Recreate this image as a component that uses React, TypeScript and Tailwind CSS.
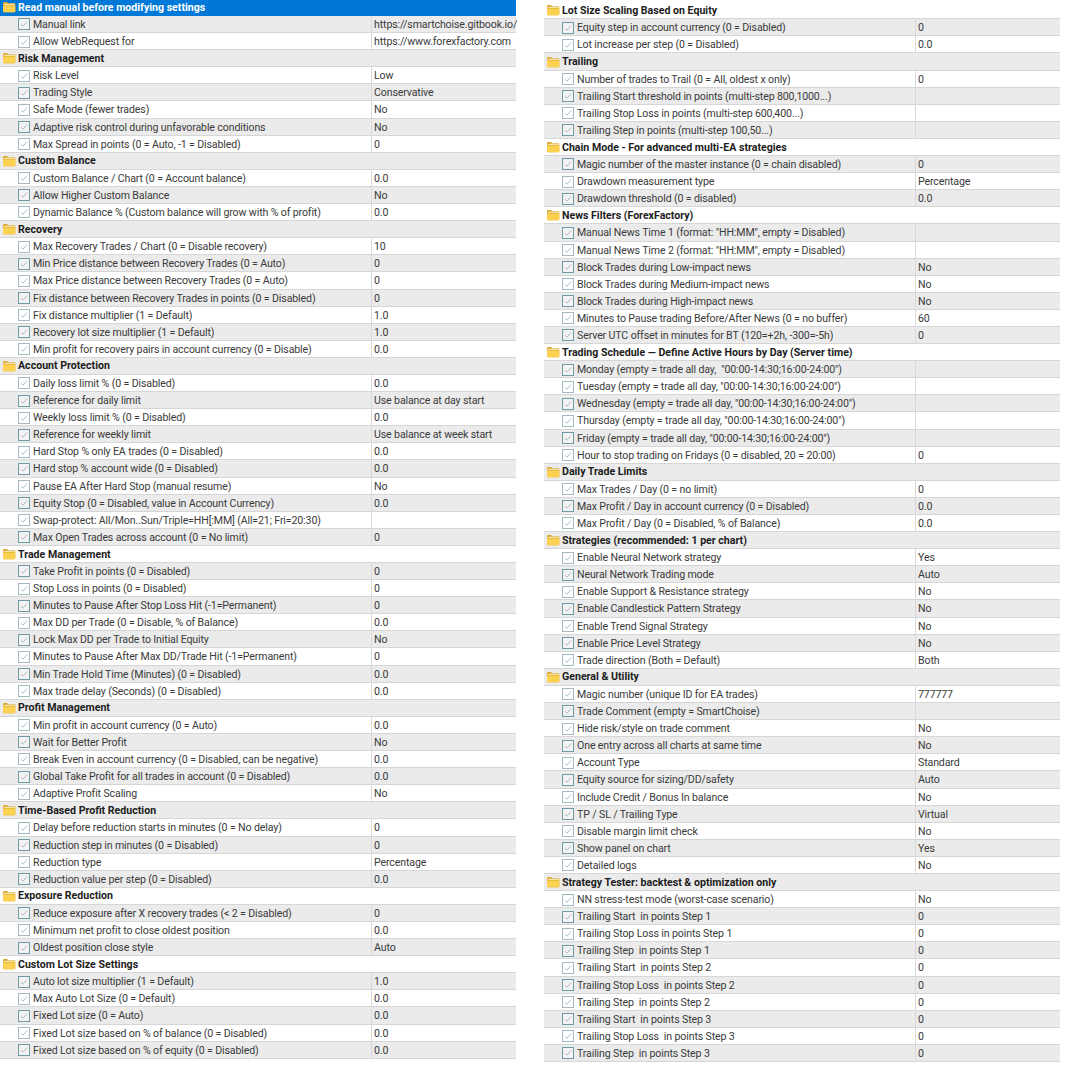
import React from 'react';

type Row = { label: string; value?: string; group?: boolean; selected?: boolean };

const g = (label: string, selected = false): Row => ({ label, group: true, selected });
const r = (label: string, value = ''): Row => ({ label, value });

const leftRows: Row[] = [
  g('Read manual before modifying settings', true),
  r('Manual link', 'https://smartchoise.gitbook.io/'),
  r('Allow WebRequest for', 'https://www.forexfactory.com'),
  g('Risk Management'),
  r('Risk Level', 'Low'),
  r('Trading Style', 'Conservative'),
  r('Safe Mode (fewer trades)', 'No'),
  r('Adaptive risk control during unfavorable conditions', 'No'),
  r('Max Spread in points (0 = Auto, -1 = Disabled)', '0'),
  g('Custom Balance'),
  r('Custom Balance / Chart (0 = Account balance)', '0.0'),
  r('Allow Higher Custom Balance', 'No'),
  r('Dynamic Balance % (Custom balance will grow with % of profit)', '0.0'),
  g('Recovery'),
  r('Max Recovery Trades / Chart (0 = Disable recovery)', '10'),
  r('Min Price distance between Recovery Trades (0 = Auto)', '0'),
  r('Max Price distance between Recovery Trades (0 = Auto)', '0'),
  r('Fix distance between Recovery Trades in points (0 = Disabled)', '0'),
  r('Fix distance multiplier (1 = Default)', '1.0'),
  r('Recovery lot size multiplier (1 = Default)', '1.0'),
  r('Min profit for recovery pairs in account currency (0 = Disable)', '0.0'),
  g('Account Protection'),
  r('Daily loss limit % (0 = Disabled)', '0.0'),
  r('Reference for daily limit', 'Use balance at day start'),
  r('Weekly loss limit % (0 = Disabled)', '0.0'),
  r('Reference for weekly limit', 'Use balance at week start'),
  r('Hard Stop % only EA trades (0 = Disabled)', '0.0'),
  r('Hard stop % account wide (0 = Disabled)', '0.0'),
  r('Pause EA After Hard Stop (manual resume)', 'No'),
  r('Equity Stop (0 = Disabled, value in Account Currency)', '0.0'),
  r('Swap-protect: All/Mon..Sun/Triple=HH[:MM] (All=21; Fri=20:30)'),
  r('Max Open Trades across account (0 = No limit)', '0'),
  g('Trade Management'),
  r('Take Profit in points (0 = Disabled)', '0'),
  r('Stop Loss in points (0 = Disabled)', '0'),
  r('Minutes to Pause After Stop Loss Hit (-1=Permanent)', '0'),
  r('Max DD per Trade (0 = Disable, % of Balance)', '0.0'),
  r('Lock Max DD per Trade to Initial Equity', 'No'),
  r('Minutes to Pause After Max DD/Trade Hit (-1=Permanent)', '0'),
  r('Min Trade Hold Time (Minutes) (0 = Disabled)', '0.0'),
  r('Max trade delay (Seconds) (0 = Disabled)', '0.0'),
  g('Profit Management'),
  r('Min profit in account currency (0 = Auto)', '0.0'),
  r('Wait for Better Profit', 'No'),
  r('Break Even in account currency (0 = Disabled, can be negative)', '0.0'),
  r('Global Take Profit for all trades in account (0 = Disabled)', '0.0'),
  r('Adaptive Profit Scaling', 'No'),
  g('Time-Based Profit Reduction'),
  r('Delay before reduction starts in minutes (0 = No delay)', '0'),
  r('Reduction step in minutes (0 = Disabled)', '0'),
  r('Reduction type', 'Percentage'),
  r('Reduction value per step (0 = Disabled)', '0.0'),
  g('Exposure Reduction'),
  r('Reduce exposure after X recovery trades (< 2 = Disabled)', '0'),
  r('Minimum net profit to close oldest position', '0.0'),
  r('Oldest position close style', 'Auto'),
  g('Custom Lot Size Settings'),
  r('Auto lot size multiplier (1 = Default)', '1.0'),
  r('Max Auto Lot Size (0 = Default)', '0.0'),
  r('Fixed Lot size (0 = Auto)', '0.0'),
  r('Fixed Lot size based on % of balance (0 = Disabled)', '0.0'),
  r('Fixed Lot size based on % of equity (0 = Disabled)', '0.0'),
];

const rightRows: Row[] = [
  g('Lot Size Scaling Based on Equity'),
  r('Equity step in account currency (0 = Disabled)', '0'),
  r('Lot increase per step (0 = Disabled)', '0.0'),
  g('Trailing'),
  r('Number of trades to Trail (0 = All, oldest x only)', '0'),
  r('Trailing Start threshold in points (multi-step 800,1000...)'),
  r('Trailing Stop Loss in points (multi-step 600,400...)'),
  r('Trailing Step in points (multi-step 100,50...)'),
  g('Chain Mode - For advanced multi-EA strategies'),
  r('Magic number of the master instance (0 = chain disabled)', '0'),
  r('Drawdown measurement type', 'Percentage'),
  r('Drawdown threshold (0 = disabled)', '0.0'),
  g('News Filters (ForexFactory)'),
  r('Manual News Time 1 (format: "HH:MM", empty = Disabled)'),
  r('Manual News Time 2 (format: "HH:MM", empty = Disabled)'),
  r('Block Trades during Low-impact news', 'No'),
  r('Block Trades during Medium-impact news', 'No'),
  r('Block Trades during High-impact news', 'No'),
  r('Minutes to Pause trading Before/After News (0 = no buffer)', '60'),
  r('Server UTC offset in minutes for BT (120=+2h, -300=-5h)', '0'),
  g('Trading Schedule — Define Active Hours by Day (Server time)'),
  r('Monday (empty = trade all day,  "00:00-14:30;16:00-24:00")'),
  r('Tuesday (empty = trade all day, "00:00-14:30;16:00-24:00")'),
  r('Wednesday (empty = trade all day, "00:00-14:30;16:00-24:00")'),
  r('Thursday (empty = trade all day, "00:00-14:30;16:00-24:00")'),
  r('Friday (empty = trade all day, "00:00-14:30;16:00-24:00")'),
  r('Hour to stop trading on Fridays (0 = disabled, 20 = 20:00)', '0'),
  g('Daily Trade Limits'),
  r('Max Trades / Day (0 = no limit)', '0'),
  r('Max Profit / Day in account currency (0 = Disabled)', '0.0'),
  r('Max Profit / Day (0 = Disabled, % of Balance)', '0.0'),
  g('Strategies (recommended: 1 per chart)'),
  r('Enable Neural Network strategy', 'Yes'),
  r('Neural Network Trading mode', 'Auto'),
  r('Enable Support & Resistance strategy', 'No'),
  r('Enable Candlestick Pattern Strategy', 'No'),
  r('Enable Trend Signal Strategy', 'No'),
  r('Enable Price Level Strategy', 'No'),
  r('Trade direction (Both = Default)', 'Both'),
  g('General & Utility'),
  r('Magic number (unique ID for EA trades)', '777777'),
  r('Trade Comment (empty = SmartChoise)'),
  r('Hide risk/style on trade comment', 'No'),
  r('One entry across all charts at same time', 'No'),
  r('Account Type', 'Standard'),
  r('Equity source for sizing/DD/safety', 'Auto'),
  r('Include Credit / Bonus In balance', 'No'),
  r('TP / SL / Trailing Type', 'Virtual'),
  r('Disable margin limit check', 'No'),
  r('Show panel on chart', 'Yes'),
  r('Detailed logs', 'No'),
  g('Strategy Tester: backtest & optimization only'),
  r('NN stress-test mode (worst-case scenario)', 'No'),
  r('Trailing Start  in points Step 1', '0'),
  r('Trailing Stop Loss in points Step 1', '0'),
  r('Trailing Step  in points Step 1', '0'),
  r('Trailing Start  in points Step 2', '0'),
  r('Trailing Stop Loss  in points Step 2', '0'),
  r('Trailing Step  in points Step 2', '0'),
  r('Trailing Start  in points Step 3', '0'),
  r('Trailing Stop Loss  in points Step 3', '0'),
  r('Trailing Step  in points Step 3', '0'),
];

const FolderIcon = () => (
  <svg width="14" height="12" viewBox="0 0 14 12" className="shrink-0">
    <path d="M1 2.2 Q1 1 2.2 1 H5 L6.3 2.2 H12.2 Q13.3 2.2 13.3 3.3 V10.2 Q13.3 11.2 12.2 11.2 H2 Q1 11.2 1 10.2 Z" fill="#dba42c" />
    <path d="M1 4.4 H13.3 V10.2 Q13.3 11.2 12.2 11.2 H2 Q1 11.2 1 10.2 Z" fill="#fcd14f" />
    <path d="M1.8 3.3 H12.6" stroke="#fdf3cf" strokeWidth="1" />
  </svg>
);

const CheckBox = ({ shaded }: { shaded: boolean }) => (
  <span
    className={`flex h-3 w-3 shrink-0 items-center justify-center border ${
      shaded ? 'border-[#6f9aa8] bg-[#f2f2f2]' : 'border-[#a3bac3] bg-white'
    }`}
  >
    <svg width="8" height="8" viewBox="0 0 8 8">
      <path d="M1 4.2 L3 6.2 L7 1.6" fill="none" stroke="#b0bfc5" strokeWidth="1" />
    </svg>
  </span>
);

const SettingRow = ({ row, index }: { row: Row; index: number }) => {
  const shaded = index % 2 === 1;
  const bg = row.selected ? 'bg-[#0078d7]' : shaded ? 'bg-[#ebebeb]' : 'bg-white';
  const border = row.selected ? '' : 'border-b border-[#d6d6d6]';

  if (row.group) {
    return (
      <div className={`flex h-[17.1px] items-center gap-[2px] pl-[2px] ${bg} ${border}`}>
        <FolderIcon />
        <span className={`whitespace-pre pt-px text-[10.6px] font-bold ${row.selected ? 'text-white' : 'text-[#1c1c1c]'}`}>
          {row.label}
        </span>
      </div>
    );
  }

  return (
    <div className={`grid h-[17.1px] grid-cols-[371px_1fr] items-stretch ${bg} ${border}`}>
      <div className="flex items-center gap-[3px] pl-[18px]">
        <CheckBox shaded={shaded} />
        <span className="whitespace-pre pt-px text-[10.6px] tracking-[-0.13px] text-[#3a3a3a]">{row.label}</span>
      </div>
      <div className="flex items-center whitespace-nowrap border-l border-[#d9d9d9] pl-[2px] pt-px text-[10.6px] tracking-[-0.13px] text-[#3a3a3a]">
        {row.value}
      </div>
    </div>
  );
};

const SettingsTable = ({ rows, className }: { rows: Row[]; className: string }) => (
  <div className={`w-[516px] shrink-0 ${className}`}>
    {rows.map((row, i) => (
      <SettingRow key={i} row={row} index={i} />
    ))}
  </div>
);

export default function App() {
  return (
    <div className="flex h-[1080px] w-[1091px] items-start gap-[28px] overflow-hidden bg-white font-['Roboto',sans-serif]">
      <SettingsTable rows={leftRows} className="-mt-[1.1px]" />
      <SettingsTable rows={rightRows} className="mt-[2.2px]" />
    </div>
  );
}
